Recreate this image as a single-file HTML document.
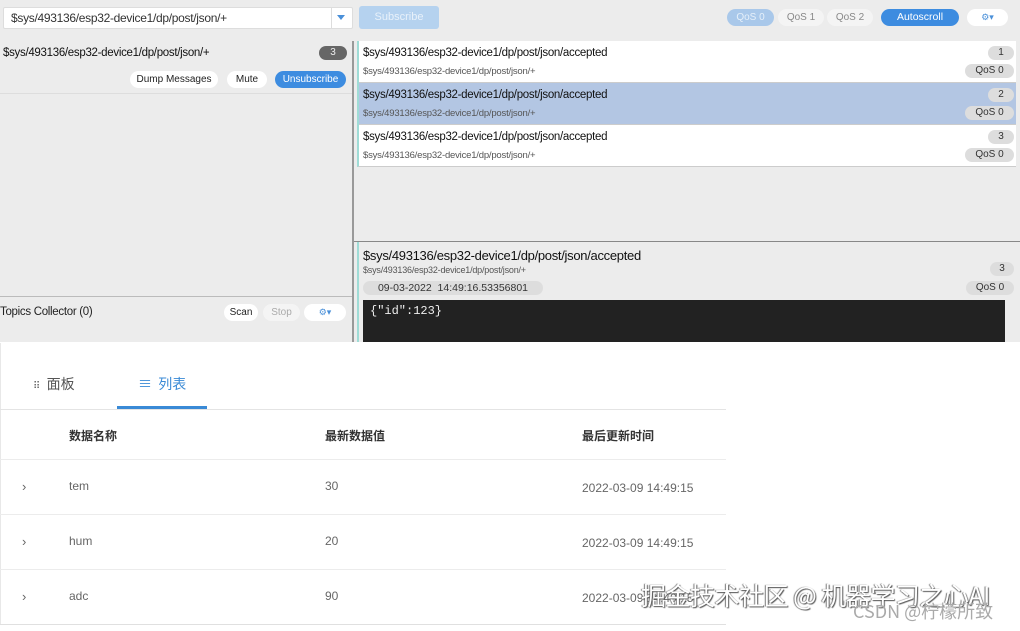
<!DOCTYPE html>
<html><head><meta charset="utf-8"><style>
*{box-sizing:border-box;margin:0;padding:0}
body{width:1020px;height:631px;overflow:hidden;background:#fff;font-family:"Liberation Sans","Noto Sans CJK SC",sans-serif;position:relative}
.a{position:absolute}
.pill{position:absolute;border-radius:9px;font-size:10px;text-align:center;line-height:17px;height:17px}
.t1{font-size:11.5px;color:#111;letter-spacing:-0.3px}
.t2{font-size:9.5px;color:#555;letter-spacing:-0.2px}
.g{background:#ddd;color:#333}
.cn{font-family:"Noto Sans CJK SC",sans-serif}
</style></head><body>
<div class="a" style="left:0;top:0;width:1020px;height:342px;background:#ececec"></div>
<div class="a" style="left:3px;top:7px;width:350px;height:22px;background:#fff;border:1px solid #ddd;border-radius:2px"></div>
<div class="a t1" style="left:11px;top:11px;font-size:12px;color:#333">$sys/493136/esp32-device1/dp/post/json/+</div>
<div class="a" style="left:331px;top:8px;width:1px;height:20px;background:#ddd"></div>
<div class="a" style="left:337px;top:15px;width:0;height:0;border-left:4px solid transparent;border-right:4px solid transparent;border-top:5px solid #4a90d9"></div>
<div class="a" style="left:359px;top:6px;width:80px;height:23px;background:#b5d2ef;border-radius:3px;color:#e8f1fa;font-size:11px;text-align:center;line-height:23px">Subscribe</div>
<div class="pill" style="left:727px;top:9px;width:47px;background:#a9c8ea;color:#e6f0fa">QoS 0</div>
<div class="pill" style="left:778px;top:9px;width:46px;background:#f4f4f4;color:#888">QoS 1</div>
<div class="pill" style="left:827px;top:9px;width:46px;background:#f4f4f4;color:#888">QoS 2</div>
<div class="pill" style="left:881px;top:9px;width:78px;background:#3d8ce0;color:#fff;font-size:10.5px">Autoscroll</div>
<div class="pill" style="left:967px;top:9px;width:41px;background:#fff;color:#4a90d9;font-size:9px">⚙▾</div>
<div class="a t1" style="left:3px;top:47px">$sys/493136/esp32-device1/dp/post/json/+</div>
<div class="pill" style="left:319px;top:46px;width:28px;height:14px;line-height:14px;background:#666;color:#eee">3</div>
<div class="pill" style="left:130px;top:71px;width:88px;background:#fff;color:#222">Dump Messages</div>
<div class="pill" style="left:227px;top:71px;width:40px;background:#fff;color:#222">Mute</div>
<div class="pill" style="left:275px;top:71px;width:71px;background:#3d8ce0;color:#fff">Unsubscribe</div>
<div class="a" style="left:0;top:93px;width:352px;height:1px;background:#ddd"></div>
<div class="a" style="left:0;top:296px;width:352px;height:1px;background:#bbb"></div>
<div class="a t1" style="left:0;top:306px;font-size:11.5px;color:#222">Topics Collector (0)</div>
<div class="pill" style="left:224px;top:304px;width:34px;background:#fff;color:#222">Scan</div>
<div class="pill" style="left:263px;top:304px;width:37px;background:#f4f4f4;color:#aaa">Stop</div>
<div class="pill" style="left:304px;top:304px;width:42px;background:#fff;color:#4a90d9;font-size:9px">⚙▾</div>
<div class="a" style="left:352px;top:41px;width:2px;height:301px;background:#999"></div>
<div class="a" style="left:357px;top:41px;width:659px;height:126px;background:#fff;border-left:2px solid #9fdcd6;border-bottom:1px solid #ccc"></div>
<div class="a" style="left:359px;top:83px;width:657px;height:42px;background:#b3c6e3"></div>
<div class="a" style="left:359px;top:82px;width:657px;height:1px;background:#ccc"></div>
<div class="a" style="left:359px;top:124px;width:657px;height:1px;background:#ccc"></div>
<div class="a t1" style="left:363px;top:47px">$sys/493136/esp32-device1/dp/post/json/accepted</div>
<div class="a t2" style="left:363px;top:66px">$sys/493136/esp32-device1/dp/post/json/+</div>
<div class="a t1" style="left:363px;top:89px">$sys/493136/esp32-device1/dp/post/json/accepted</div>
<div class="a t2" style="left:363px;top:108px">$sys/493136/esp32-device1/dp/post/json/+</div>
<div class="a t1" style="left:363px;top:131px">$sys/493136/esp32-device1/dp/post/json/accepted</div>
<div class="a t2" style="left:363px;top:150px">$sys/493136/esp32-device1/dp/post/json/+</div>
<div class="pill g" style="left:988px;top:46px;width:26px;height:14px;line-height:14px">1</div>
<div class="pill g" style="left:965px;top:64px;width:49px;height:14px;line-height:14px">QoS 0</div>
<div class="pill g" style="left:988px;top:88px;width:26px;height:14px;line-height:14px">2</div>
<div class="pill g" style="left:965px;top:106px;width:49px;height:14px;line-height:14px">QoS 0</div>
<div class="pill g" style="left:988px;top:130px;width:26px;height:14px;line-height:14px">3</div>
<div class="pill g" style="left:965px;top:148px;width:49px;height:14px;line-height:14px">QoS 0</div>
<div class="a" style="left:354px;top:241px;width:666px;height:1px;background:#888"></div>
<div class="a" style="left:357px;top:242px;width:2px;height:100px;background:#9fdcd6"></div>
<div class="a t1" style="left:363px;top:248px;font-size:13px">$sys/493136/esp32-device1/dp/post/json/accepted</div>
<div class="a t2" style="left:363px;top:265px;font-size:9px">$sys/493136/esp32-device1/dp/post/json/+</div>
<div class="pill g" style="left:990px;top:262px;width:24px;height:14px;line-height:14px">3</div>
<div class="pill g" style="left:363px;top:281px;width:180px;height:14px;line-height:14px;font-size:10.5px">09-03-2022 &nbsp;14:49:16.53356801</div>
<div class="pill g" style="left:966px;top:281px;width:48px;height:14px;line-height:14px">QoS 0</div>
<div class="a" style="left:363px;top:300px;width:642px;height:42px;background:#222"></div>
<div class="a" style="left:370px;top:304px;color:#eee;font-family:'Liberation Mono',monospace;font-size:12px">{"id":123}</div>
<div class="a" style="left:0;top:343px;width:1px;height:282px;background:#e8e8e8"></div>
<div class="a cn" style="left:33px;top:374px;font-size:14px;color:#555"><span style="font-size:10px;color:#666">⠿</span>&nbsp; 面板</div>
<div class="a cn" style="left:138px;top:374px;font-size:14px;color:#3a8ad6">≡&nbsp; 列表</div>
<div class="a" style="left:117px;top:406px;width:90px;height:3px;background:#3a8ad6"></div>
<div class="a" style="left:0;top:409px;width:726px;height:1px;background:#e4e4e4"></div>
<div class="a cn" style="left:69px;top:427px;font-size:12px;color:#333;font-weight:bold">数据名称</div>
<div class="a cn" style="left:325px;top:427px;font-size:12px;color:#333;font-weight:bold">最新数据值</div>
<div class="a cn" style="left:582px;top:427px;font-size:12px;color:#333;font-weight:bold">最后更新时间</div>
<div class="a" style="left:0;top:459px;width:726px;height:1px;background:#ececec"></div>
<div class="a" style="left:0;top:514px;width:726px;height:1px;background:#ececec"></div>
<div class="a" style="left:0;top:569px;width:726px;height:1px;background:#ececec"></div>
<div class="a" style="left:0;top:624px;width:726px;height:1px;background:#e0e0e0"></div>
<div class="a" style="left:22px;top:479px;font-size:13px;color:#666">›</div>
<div class="a" style="left:22px;top:534px;font-size:13px;color:#666">›</div>
<div class="a" style="left:22px;top:589px;font-size:13px;color:#666">›</div>
<div class="a" style="left:69px;top:479px;font-size:12px;color:#666">tem</div>
<div class="a" style="left:69px;top:534px;font-size:12px;color:#666">hum</div>
<div class="a" style="left:69px;top:589px;font-size:12px;color:#666">adc</div>
<div class="a" style="left:325px;top:479px;font-size:12px;color:#666">30</div>
<div class="a" style="left:325px;top:534px;font-size:12px;color:#666">20</div>
<div class="a" style="left:325px;top:589px;font-size:12px;color:#666">90</div>
<div class="a" style="left:582px;top:481px;font-size:12px;color:#666">2022-03-09 14:49:15</div>
<div class="a" style="left:582px;top:536px;font-size:12px;color:#666">2022-03-09 14:49:15</div>
<div class="a" style="left:582px;top:591px;font-size:12px;color:#666">2022-03-09 14:49:15</div>
<div class="a cn" style="left:641px;top:578px;font-size:25px;line-height:34px;color:#fff;text-shadow:1px 1px 1px #555,-1px 0 1px #777;white-space:nowrap;letter-spacing:-0.5px">掘金技术社区 @ 机器学习之心AI</div>
<div class="a cn" style="left:853px;top:598px;font-size:18px;line-height:26px;color:#aaa;white-space:nowrap">CSDN @柠檬所致</div>
</body></html>
